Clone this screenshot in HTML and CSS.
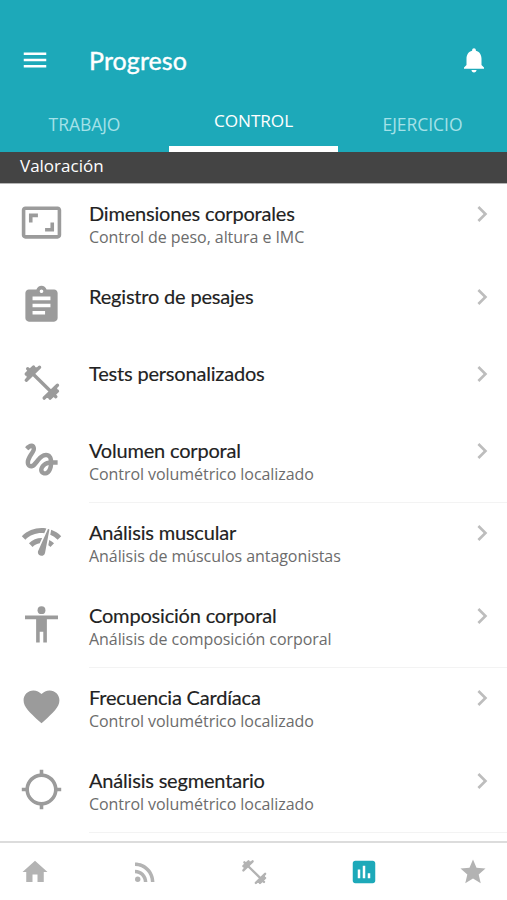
FILE: index.html
```html
<!DOCTYPE html>
<html lang="es">
<head>
<meta charset="utf-8">
<title>Progreso</title>
<link rel="stylesheet" href="styles.css">
</head>
<body>
<svg class="defs" width="0" height="0" aria-hidden="true">
  <symbol id="chevron" viewBox="0 0 24 24"><path d="M10 6 8.59 7.41 13.17 12l-4.58 4.59L10 18l6-6z"/></symbol>
  <symbol id="dumbbell" viewBox="0 0 24 24">
    <g fill="currentColor" stroke="currentColor" stroke-linecap="round" stroke-linejoin="round">
      <path stroke-width="1.9" d="M7 7 17.500 17.300"/>
      <path stroke-width="1.900" d="M3.500 10.700 10.900 3.500M3.500 7.300 7.600 3.400M4.300 4.300 7 7"/>
      <path stroke-width="1.300" d="M4.400 9.400 9.600 4.300 8 4 6.300 4.600 4.800 6 4.200 7.600z"/>
      <path stroke-width="1.900" d="M13.500 20.700 20.900 13.500M16.800 20.700 20.900 16.800M20 19.900 17.500 17.500"/>
      <path stroke-width="1.300" d="M14.800 19.900 20 14.800 20.300 16.500 19.600 18.200 18.200 19.600 16.500 20.300z"/>
    </g>
  </symbol>
</svg>
<div class="app">
  <header class="header">
    <div class="bar">
      <svg class="icon" viewBox="0 0 24 24"><path d="M3 18h18v-2H3v2zm0-5h18v-2H3v2zm0-7v2h18V6H3z"/></svg>
      <h1 class="heading">Progreso</h1>
      <svg class="icon" viewBox="0 0 24 24"><path d="M12 22c1.1 0 2-.9 2-2h-4c0 1.1.9 2 2 2zm6-6v-5c0-3.07-1.63-5.64-4.5-6.32V4c0-.83-.67-1.5-1.5-1.5s-1.5.67-1.5 1.5v.68C7.64 5.36 6 7.92 6 11v5l-2 2v1h16v-1l-2-2z"/></svg>
    </div>
    <nav class="tabs">
      <a class="tab">TRABAJO</a>
      <a class="tab active">CONTROL</a>
      <a class="tab">EJERCICIO</a>
    </nav>
  </header>
  <div class="section">Valoración</div>
  <main class="list">
    <div class="row">
      <svg class="lead" viewBox="0 0 24 24"><path d="M19 12h-2v3h-3v2h5v-5zM7 9h3V7H5v5h2V9zm14-6H3c-1.1 0-2 .9-2 2v14c0 1.1.9 2 2 2h18c1.100 0 2-.9 2-2V5c0-1.100-.9-2-2-2zm0 16.010H3V4.990h18v14.020z"/></svg>
      <div class="text"><div class="title">Dimensiones corporales</div><div class="sub">Control de peso, altura e IMC</div></div>
      <svg class="chev"><use href="#chevron"/></svg>
    </div>
    <div class="row single">
      <svg class="lead" viewBox="0 0 24 24"><path d="M19 3h-4.180C14.400 1.840 13.300 1 12 1c-1.300 0-2.400.84-2.820 2H5c-1.100 0-2 .9-2 2v14c0 1.100.9 2 2 2h14c1.100 0 2-.9 2-2V5c0-1.100-.9-2-2-2zm-7 0c.55 0 1 .45 1 1s-.45 1-1 1-1-.45-1-1 .45-1 1-1zm2 14H7v-2h7v2zm3-4H7v-2h10v2zm0-4H7V7h10v2z"/></svg>
      <div class="text"><div class="title">Registro de pesajes</div></div>
      <svg class="chev"><use href="#chevron"/></svg>
    </div>
    <div class="row single">
      <svg class="lead"><use href="#dumbbell"/></svg>
      <div class="text"><div class="title">Tests personalizados</div></div>
      <svg class="chev"><use href="#chevron"/></svg>
    </div>
    <div class="row short ruled">
      <svg class="lead" viewBox="0 0 24 24"><path d="M4.590 6.890c.7-.71 1.400-1.350 1.710-1.220.5.2 0 1.030-.3 1.520-.25.42-2.860 3.890-2.860 6.310 0 1.280.48 2.340 1.340 2.980.75.56 1.740.73 2.640.46 1.070-.31 1.950-1.400 3.060-2.770 1.210-1.490 2.830-3.440 4.080-3.440 1.630 0 1.650 1.010 1.760 1.790-3.780.64-5.380 3.670-5.380 5.370 0 1.700 1.440 3.090 3.210 3.090 1.630 0 4.290-1.330 4.690-6.100H21v-2.500h-2.470c-.15-1.650-1.090-4.200-4.030-4.200-2.250 0-4.180 1.910-4.940 2.840-.58.73-2.060 2.480-2.290 2.720-.25.3-.68.84-1.110.84-.45 0-.72-.83-.36-1.920.35-1.090 1.400-2.860 1.850-3.520.78-1.140 1.300-1.920 1.300-3.280C8.950 3.690 7.310 3 6.440 3 5.120 3 3.970 4 3.720 4.250c-.36.36-.66.66-.88.93l1.750 1.710zm9.290 11.660c-.31 0-.74-.26-.74-.72 0-.6.73-2.200 2.870-2.760-.3 2.690-1.430 3.480-2.130 3.480z"/></svg>
      <div class="text"><div class="title">Volumen corporal</div><div class="sub">Control volumétrico localizado</div></div>
      <svg class="chev"><use href="#chevron"/></svg>
    </div>
    <div class="row">
      <svg class="lead" viewBox="0 0 24 24"><path d="M15.900 5c-.17 0-.32.09-.41.23l-.07.15-5.180 11.650c-.16.29-.26.61-.26.96 0 1.110.9 2.010 2.010 2.010.96 0 1.770-.68 1.960-1.590l.01-.03L16.400 5.500c0-.28-.22-.5-.5-.5zM1 9l2 2c2.880-2.880 6.790-4.080 10.530-3.620l1.190-2.680C9.890 3.840 4.740 5.270 1 9zm20 2l2-2c-1.640-1.640-3.550-2.820-5.590-3.570l-.53 2.820c1.500.62 2.900 1.530 4.120 2.750zm-4 4l2-2c-.8-.8-1.700-1.420-2.660-1.890l-.55 2.920c.42.27.83.59 1.210.97zM5 13l2 2c1.130-1.130 2.560-1.790 4.030-2l1.280-2.880c-2.630-.08-5.300.87-7.310 2.880z"/></svg>
      <div class="text"><div class="title">Análisis muscular</div><div class="sub">Análisis de músculos antagonistas</div></div>
      <svg class="chev"><use href="#chevron"/></svg>
    </div>
    <div class="row short ruled">
      <svg class="lead" viewBox="0 0 24 24"><circle cx="12" cy="4" r="2.200"/><path d="M21.200 9H15v13h-2v-6h-2v6H9V9H2.800V7h18.400z"/></svg>
      <div class="text"><div class="title">Composición corporal</div><div class="sub">Análisis de composición corporal</div></div>
      <svg class="chev"><use href="#chevron"/></svg>
    </div>
    <div class="row">
      <svg class="lead" viewBox="0 0 24 24"><path d="M12 21.350l-1.450-1.320C5.400 15.360 2 12.280 2 8.500 2 5.420 4.420 3 7.500 3c1.740 0 3.410.81 4.500 2.090C13.090 3.810 14.760 3 16.500 3 19.580 3 22 5.420 22 8.500c0 3.780-3.400 6.860-8.550 11.540L12 21.350z"/></svg>
      <div class="text"><div class="title">Frecuencia Cardíaca</div><div class="sub">Control volumétrico localizado</div></div>
      <svg class="chev"><use href="#chevron"/></svg>
    </div>
    <div class="row short ruled">
      <svg class="lead" viewBox="0 0 24 24"><path d="M20.940 11c-.46-4.170-3.770-7.480-7.940-7.940V1h-2v2.060C6.830 3.520 3.520 6.830 3.060 11H1v2h2.060c.46 4.170 3.770 7.480 7.940 7.940V23h2v-2.060c4.170-.46 7.480-3.770 7.940-7.940H23v-2h-2.060zM12 19c-3.870 0-7-3.130-7-7s3.130-7 7-7 7 3.130 7 7-3.130 7-7 7z"/></svg>
      <div class="text"><div class="title">Análisis segmentario</div><div class="sub">Control volumétrico localizado</div></div>
      <svg class="chev"><use href="#chevron"/></svg>
    </div>
  </main>
  <nav class="bottom">
    <svg class="icon" viewBox="0 0 24 24"><path d="M10 20v-6h4v6h5v-8h3L12 3 2 12h3v8z"/></svg>
    <svg class="icon" viewBox="0 0 24 24"><circle cx="6.180" cy="17.820" r="2.180"/><path d="M4 4.440v2.830c7.030 0 12.730 5.700 12.730 12.730h2.830c0-8.590-6.970-15.560-15.560-15.560zm0 5.660v2.830c3.900 0 7.070 3.170 7.070 7.070h2.830c0-5.470-4.430-9.900-9.900-9.900z"/></svg>
    <svg class="icon"><use href="#dumbbell"/></svg>
    <svg class="icon current" viewBox="0 0 24 24"><path d="M19 3H5c-1.100 0-2 .9-2 2v14c0 1.100.9 2 2 2h14c1.100 0 2-.9 2-2V5c0-1.100-.9-2-2-2zM9 17H7v-7h2v7zm4 0h-2V7h2v10zm4 0h-2v-4h2v4z"/></svg>
    <svg class="icon" viewBox="0 0 24 24"><path d="M12 17.270 18.180 21l-1.640-7.030L22 9.240l-7.190-.61L12 2 9.190 8.630 2 9.240l5.460 4.730L5.820 21z"/></svg>
  </nav>
</div>
</body>
</html>
```
FILE: styles.css
```css
* { box-sizing: border-box; }
body { margin: 0; background: #fff; font-family: "Open Sans", sans-serif; }
svg { display: block; flex: none; fill: currentColor; }
.defs { position: absolute; }
.app { width: 507px; height: 900px; display: flex; flex-direction: column; overflow: hidden; }
.header { height: 152px; background: #1da9b9; color: #fff; display: flex; flex-direction: column; flex: none; }
.bar { height: 96px; padding: 24px 18px 0 20px; display: flex; align-items: center; }
.icon { width: 30px; height: 30px; }
.heading { flex: 1; margin: 0 0 0 39px; font: 400 25px/32px Lato, sans-serif; letter-spacing: .1px; -webkit-text-stroke: .4px currentColor; }
.tabs { flex: 1; display: grid; grid-template-columns: repeat(3, 1fr); }
.tab { text-align: center; font-size: 17.5px; letter-spacing: -.05px; line-height: 24px; padding-top: 16px; color: #a4e1e8; }
.tab.active { color: #fff; padding-top: 13px; border-bottom: 6px solid #fff; font-size: 17.2px; }
.section { height: 32px; flex: none; background: #444; color: #fff; padding-left: 20px; font-size: 17px; line-height: 27px; border-bottom: 1px solid #b5b5b5; }
.list { height: 657px; flex: none; color: #222; }
.row { height: 83px; display: flex; align-items: flex-start; padding-left: 20px; padding-right: 9px; }
.row.single { height: 77px; }
.row.short { height: 82px; }
.lead { width: 43px; height: 43px; margin-top: 17px; color: #9b9b9b; }
.text { flex: 1; height: 100%; margin-left: 26px; padding-top: 17px; }
.title { font: 400 20px/24px Lato, sans-serif; letter-spacing: -.19px; -webkit-text-stroke: .15px currentColor; }
.sub { font-size: 16px; letter-spacing: -.06px; line-height: 22px; margin-top: 1px; color: #6c6c6c; }
.chev { width: 32px; height: 32px; margin-top: 14px; color: #bdbdbd; }
.ruled { background: linear-gradient(#f3f3f3, #f3f3f3) 89px 100% / 418px 1px no-repeat; }
.bottom { flex: 1; border-top: 2px solid #dcdcdc; display: flex; justify-content: space-between; align-items: center; padding: 0 19px 0 20px; color: #b3b3b3; }
.current { color: #1da9b9; }
```
